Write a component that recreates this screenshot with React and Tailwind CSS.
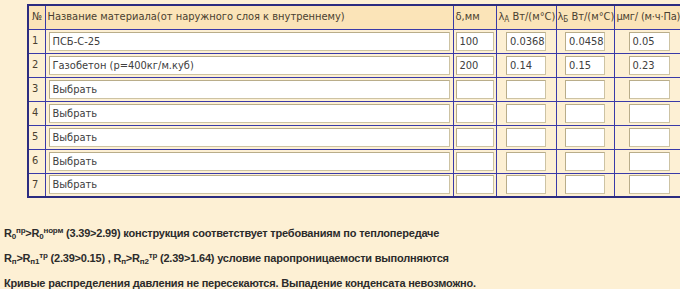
import React from 'react';

const rows = [
  { n: 1, name: 'ПСБ-С-25', d: '100', la: '0.0368', lb: '0.0458', mu: '0.05' },
  { n: 2, name: 'Газобетон (p=400кг/м.куб)', d: '200', la: '0.14', lb: '0.15', mu: '0.23' },
  { n: 3, name: 'Выбрать' },
  { n: 4, name: 'Выбрать' },
  { n: 5, name: 'Выбрать' },
  { n: 6, name: 'Выбрать' },
  { n: 7, name: 'Выбрать' },
];

const Box = ({ value, className }) => (
  <div
    className={`h-[19px] bg-white border border-[#cdc3a3] border-t-[#b9ad8a] border-l-[#b9ad8a] px-[3px] leading-[17px] text-[11px] text-[#404040] whitespace-nowrap overflow-hidden ${className}`}
  >
    {value}
  </div>
);

const cell = 'border border-[#3a3aa8] p-0 h-[24px]';

const App = () => {
  return (
    <div
      className="w-[680px] h-[289px] overflow-hidden bg-[#fdf0d4] text-[#4a3f30] pt-[4px]"
      style={{ fontFamily: '"DejaVu Sans Condensed", "DejaVu Sans", sans-serif' }}
    >
      <table className="ml-[27px] w-[656px] border-collapse border-2 border-[#2c2c80] table-fixed text-[11px]">
        <colgroup>
          <col className="w-[17px]" />
          <col className="w-[408px]" />
          <col className="w-[43px]" />
          <col className="w-[60px]" />
          <col className="w-[58px]" />
          <col className="w-[70px]" />
        </colgroup>
        <thead>
          <tr className="bg-[#fbe4b8]">
            <th className={`${cell} font-normal text-left pl-[3px]`}>№</th>
            <th className={`${cell} font-normal text-left pl-[2px]`}>
              Название материала(от наружного слоя к внутреннему)
            </th>
            <th className={`${cell} font-normal text-left pl-[2px]`}>δ,мм</th>
            <th className={`${cell} font-normal text-left pl-[2px] whitespace-nowrap`}>
              λ<sub className="text-[8px]">А</sub> Вт/(м°С)
            </th>
            <th className={`${cell} font-normal text-left pl-[1px] whitespace-nowrap`}>
              λ<sub className="text-[8px]">Б</sub> Вт/(м°С)
            </th>
            <th className={`${cell} font-normal text-left pl-[2px] whitespace-nowrap tracking-[-0.2px]`}>
              μмг/ (м·ч·Па)
            </th>
          </tr>
        </thead>
        <tbody>
          {rows.map((r) => (
            <tr key={r.n}>
              <td className={`${cell} pl-[3px]`}>{r.n}</td>
              <td className={`${cell} px-[3px]`}>
                <Box value={r.name} className="w-full" />
              </td>
              <td className={`${cell} pl-[2px]`}>
                <Box value={r.d} className="w-[38px]" />
              </td>
              <td className={cell}>
                <Box value={r.la} className="w-[40px] mx-auto" />
              </td>
              <td className={cell}>
                <Box value={r.lb} className="w-[40px] mx-auto" />
              </td>
              <td className={cell}>
                <Box value={r.mu} className="w-[41px] ml-[14px]" />
              </td>
            </tr>
          ))}
        </tbody>
      </table>

      <div
        className="mt-[28px] pl-[4px] flex flex-col gap-[11px] text-[11px] font-bold text-[#2b2b2b] leading-[14px] tracking-[-0.2px]"
        style={{ fontFamily: '"Liberation Sans", Arial, sans-serif' }}
      >
        <p>
          R<sub className="text-[8px]">0</sub>
          <sup className="text-[8px]">пр</sup>&gt;R<sub className="text-[8px]">0</sub>
          <sup className="text-[8px]">норм</sup> (3.39&gt;2.99) конструкция соответствует требованиям по теплопередаче
        </p>
        <p>
          R<sub className="text-[8px]">п</sub>&gt;R<sub className="text-[8px]">п1</sub>
          <sup className="text-[8px]">тр</sup> (2.39&gt;0.15) , R<sub className="text-[8px]">п</sub>&gt;R
          <sub className="text-[8px]">п2</sub>
          <sup className="text-[8px]">тр</sup> (2.39&gt;1.64) условие паропроницаемости выполняются
        </p>
        <p>Кривые распределения давления не пересекаются. Выпадение конденсата невозможно.</p>
      </div>
    </div>
  );
};

export default App;
